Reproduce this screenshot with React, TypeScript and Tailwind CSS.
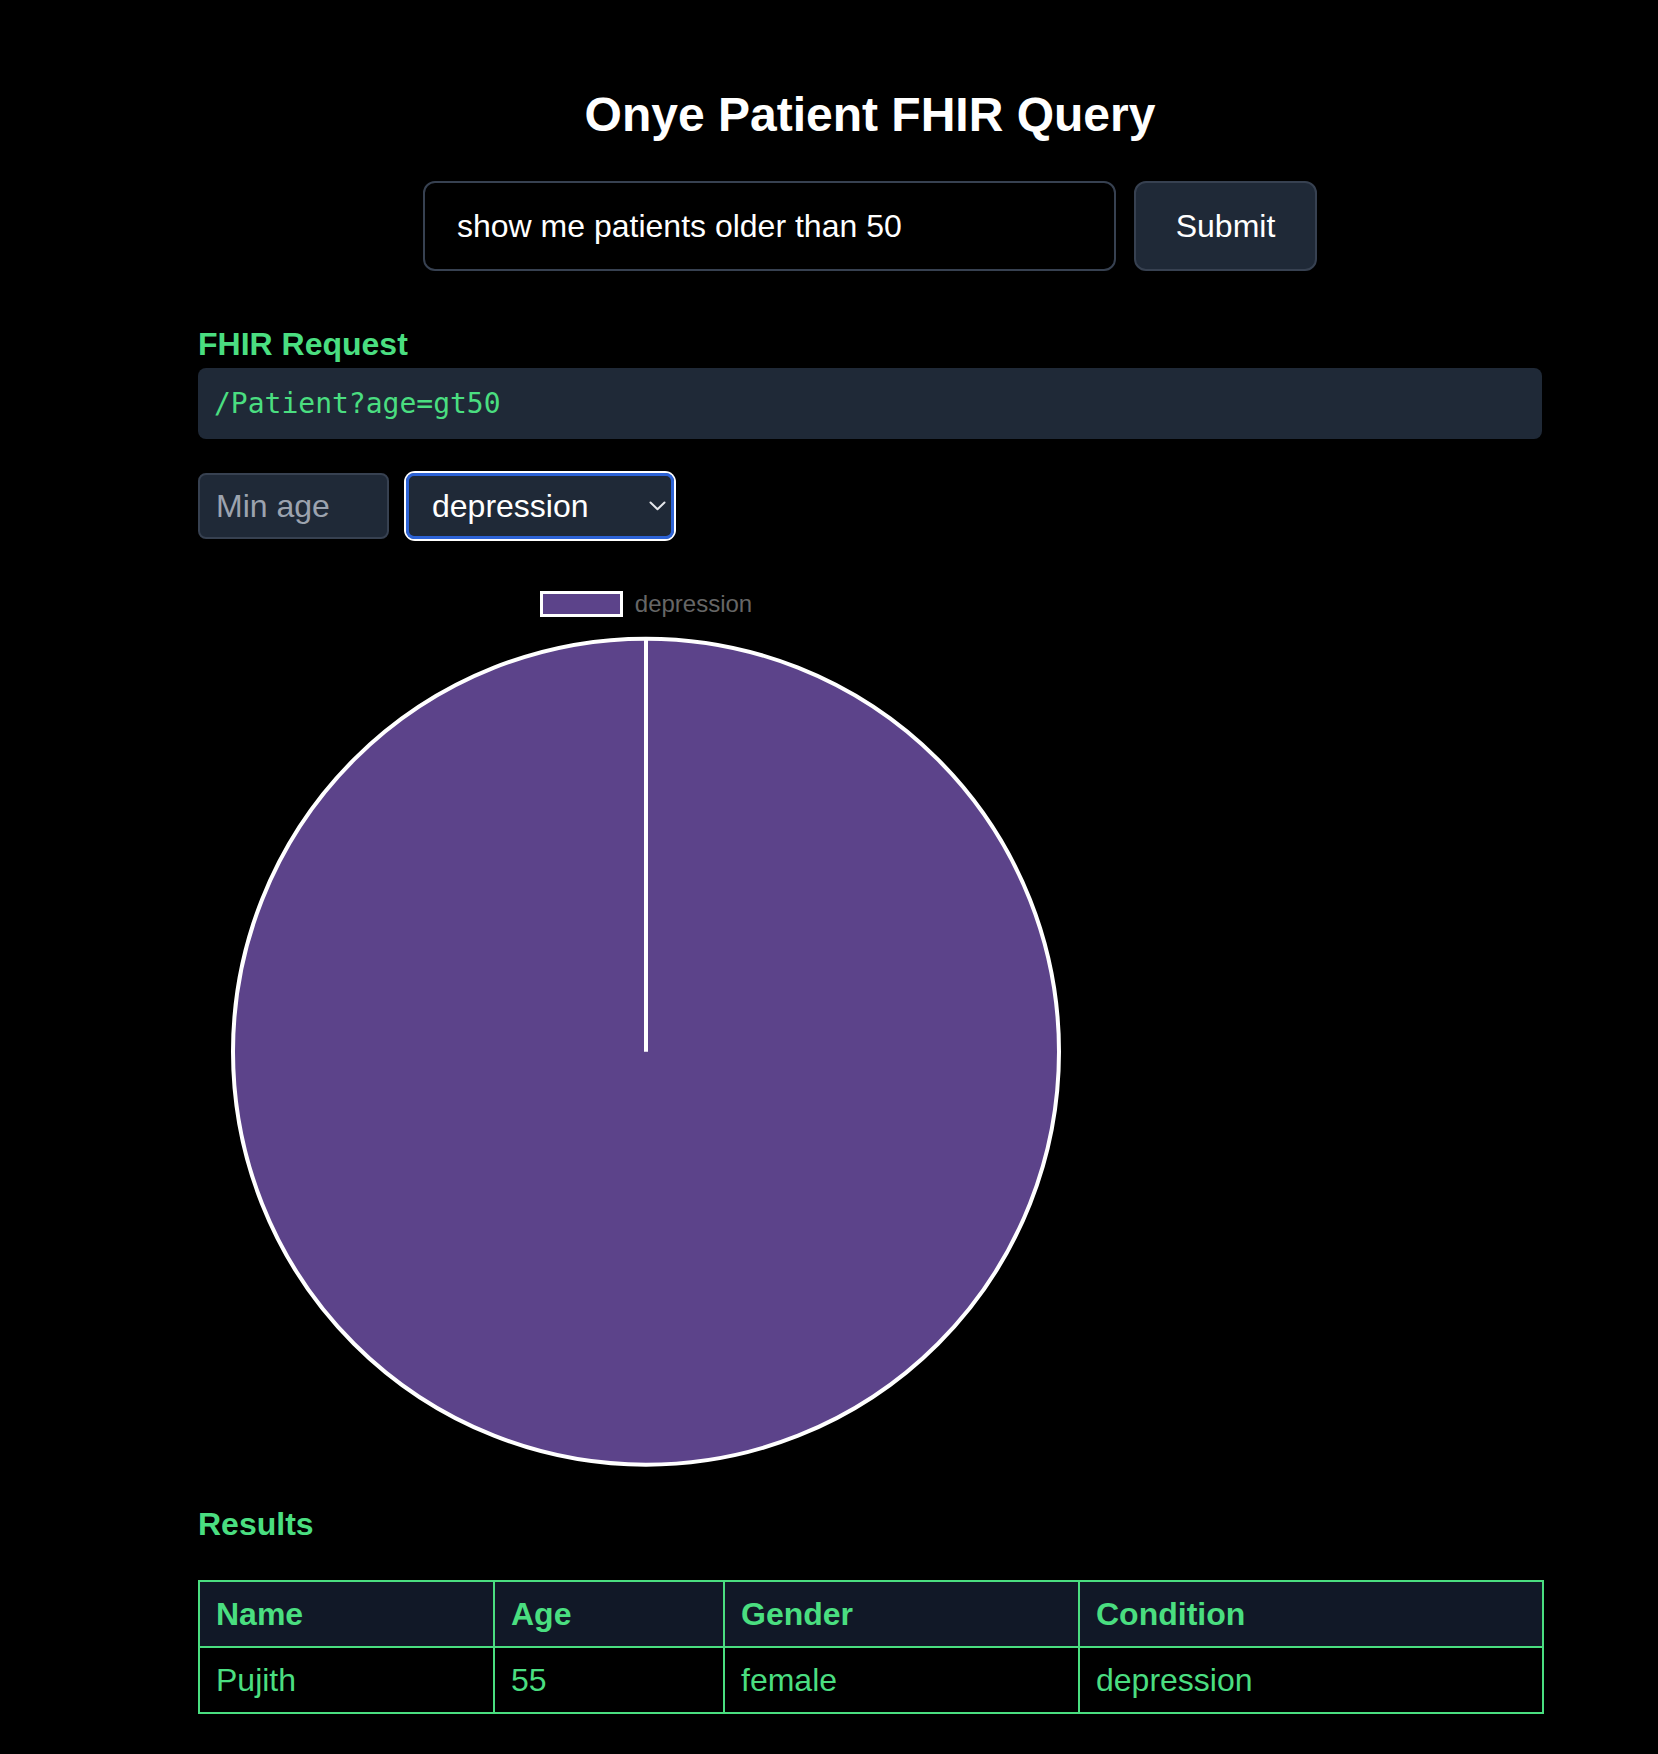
import React from "react";

export default function App() {
  const sans = { fontFamily: '"Liberation Sans", Arial, sans-serif' };
  const cx = 448;
  const cy = 416.7;
  const r = 413;
  return (
    <div className="min-h-[1754px] w-full bg-black" style={sans}>
      <div className="ml-[198px] w-[1344px] pt-[83px] pb-[40px]">
        <h1 className="text-center text-[48px] leading-[64px] font-bold text-white">
          Onye Patient FHIR Query
        </h1>

        <div className="mt-[34px] flex justify-center gap-[18px]">
          <input
            className="h-[90px] w-[693px] rounded-[12px] border-2 border-[#374151] bg-black px-[32px] text-[32px] text-white outline-none"
            defaultValue="show me patients older than 50"
            style={sans}
          />
          <button
            className="h-[90px] w-[183px] rounded-[12px] border-2 border-[#374151] bg-[#1f2937] text-[32px] text-white"
            style={sans}
          >
            Submit
          </button>
        </div>

        <h2 className="mt-[49px] text-[32px] leading-[48px] font-bold text-[#4ade80]">
          FHIR Request
        </h2>
        <div className="flex h-[71px] items-center rounded-[8px] bg-[#1f2937] px-[16px]">
          <code
            className="text-[28px] text-[#4ade80]"
            style={{ fontFamily: '"DejaVu Sans Mono", monospace' }}
          >
            /Patient?age=gt50
          </code>
        </div>

        <div className="mt-[34px] flex items-center gap-[17px]">
          <input
            className="h-[66px] w-[191px] rounded-[8px] border-2 border-[#374151] bg-[#1f2937] px-[16px] text-[32px] text-white placeholder:text-[#9ca3af] outline-none"
            placeholder="Min age"
            style={sans}
          />
          <div className="relative h-[66px] w-[268px] rounded-[9px] ring-2 ring-white">
            <select
              className="h-full w-full appearance-none rounded-[8px] border-[3px] border-[#2d63d6] bg-[#1f2937] pl-[23px] text-[32px] text-white outline-none"
              defaultValue="depression"
              style={sans}
            >
              <option value="depression">depression</option>
            </select>
            <svg
              className="pointer-events-none absolute right-[8px] top-[28px]"
              width="17"
              height="10"
              viewBox="0 0 17 10"
              fill="none"
            >
              <path d="M1.5 1.5 L8.5 8.2 L15.5 1.5" stroke="#e5e7eb" strokeWidth="2" strokeLinecap="round" strokeLinejoin="round" />
            </svg>
          </div>
        </div>

        <div className="mt-[32px] w-[896px]">
          <div className="flex h-[64px] items-start justify-center gap-[12px] pt-[20px]">
            <div className="h-[26px] w-[83px] border-[3px] border-white bg-[#5c438a]" />
            <span className="text-[24px] leading-[26px] text-[#666666]">depression</span>
          </div>
          <svg width="896" height="832" viewBox="0 0 896 832" className="block">
            <circle cx={cx} cy={cy} r={r} fill="#5c438a" stroke="#ffffff" strokeWidth="4" />
            <line x1={cx} y1={cy - r} x2={cx} y2={cy} stroke="#ffffff" strokeWidth="4" />
          </svg>
        </div>

        <h2 className="mt-[33px] text-[32px] leading-[48px] font-bold text-[#4ade80]">
          Results
        </h2>
        <table className="mt-[32px] w-full table-fixed border-collapse border-2 border-[#4ade80] text-[32px] leading-[48px] text-[#4ade80]">
          <colgroup>
            <col className="w-[295px]" />
            <col className="w-[230px]" />
            <col className="w-[355px]" />
            <col className="w-[464px]" />
          </colgroup>
          <thead>
            <tr className="bg-[#111827]">
              <th className="border-2 border-[#4ade80] px-[16px] py-[8px] text-left font-bold">Name</th>
              <th className="border-2 border-[#4ade80] px-[16px] py-[8px] text-left font-bold">Age</th>
              <th className="border-2 border-[#4ade80] px-[16px] py-[8px] text-left font-bold">Gender</th>
              <th className="border-2 border-[#4ade80] px-[16px] py-[8px] text-left font-bold">Condition</th>
            </tr>
          </thead>
          <tbody>
            <tr>
              <td className="border-2 border-[#4ade80] px-[16px] py-[8px]">Pujith</td>
              <td className="border-2 border-[#4ade80] px-[16px] py-[8px]">55</td>
              <td className="border-2 border-[#4ade80] px-[16px] py-[8px]">female</td>
              <td className="border-2 border-[#4ade80] px-[16px] py-[8px]">depression</td>
            </tr>
          </tbody>
        </table>
      </div>
    </div>
  );
}
